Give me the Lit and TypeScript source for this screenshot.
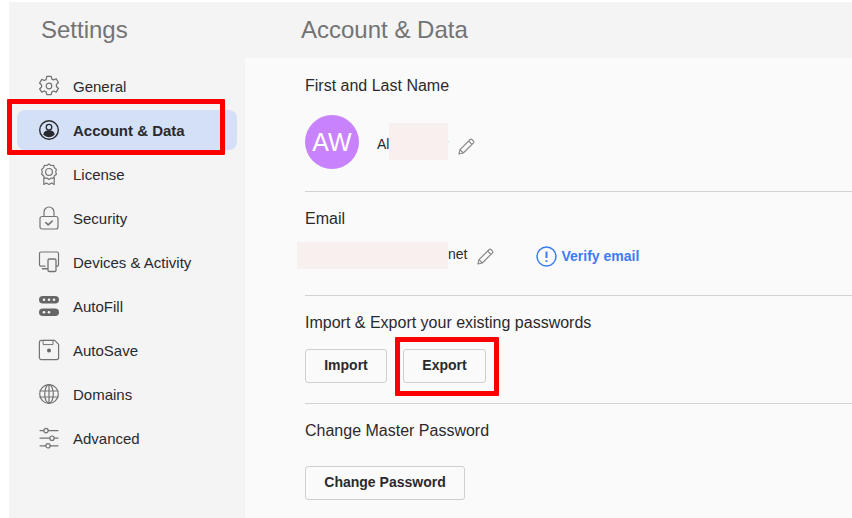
import { LitElement, html, css, svg } from "lit";
import { customElement } from "lit/decorators.js";

const ic = (body: unknown) => html`<svg class="ic" viewBox="0 0 20 20" fill="none" stroke="#737373" stroke-width="1.2" stroke-linecap="round" stroke-linejoin="round">${body}</svg>`;

const icons: Record<string, unknown> = {
  general: svg`<path d="M7.900.500h4.200l.6 2.600 1.700.800 2.400-1.100 2.100 3.500-1.900 1.800v2l1.900 1.800-2.100 3.500-2.400-1.100-1.700.8-.6 2.600H7.900l-.6-2.600-1.700-.8-2.400 1.100L1.100 12.400 3 10.600V8.600L1.100 6.800l2.100-3.500 2.400 1.100 1.700-.8z" transform="translate(-.6 -.2) scale(1.060)"/><circle cx="10" cy="10" r="2.800"/>`,
  account: svg`<circle cx="10" cy="10" r="9.300" stroke="#2a2a2e" stroke-width="1.400"/><circle cx="10" cy="7.200" r="2.800" stroke="#2a2a2e" stroke-width="1.300"/><path d="M4.900 14.400c.5-2.600 2.600-3.600 5.100-3.600s4.600 1 5.100 3.600c-1.300 1.400-3.100 2.200-5.100 2.200s-3.800-.8-5.100-2.200z" fill="#2a2a2e" stroke="#2a2a2e"/>`,
  license: svg`<path d="M10 0l2.100 1.500 2.500-.1.800 2.400 2 1.600-.7 2.400.7 2.400-2 1.600-.8 2.400-2.500-.1L10 15.600l-2.100-1.500-2.500.1-.8-2.400-2-1.600.7-2.400-.7-2.400 2-1.600.8-2.400 2.500.1z"/><circle cx="10" cy="7.900" r="3.400"/><path d="M4.800 14.200v6.300l2.600-1.500 2.600 1.500 2.600-1.500 2.600 1.500v-6.300"/>`,
  security: svg`<rect x="1" y="8.500" width="18" height="12.500" rx="2"/><path d="M5 8.500V4.200C5 1.300 7.200-1 10-1s5 2.300 5 5.200v4.300"/><path d="M6.800 14.600l2.400 2.300 4-3.800" stroke-width="1.500"/>`,
  devices: svg`<path d="M6 14.200H2A1.500 1.500 0 0 1 .5 12.700V1.500A1.500 1.500 0 0 1 2 0h16a1.500 1.500 0 0 1 1.500 1.500v11.200a1.500 1.500 0 0 1-1.500 1.500h-.5"/><path d="M3.500 16.800h5.500" stroke-width="1.600"/><rect x="9" y="7" width="8" height="12.500" rx="1.300" fill="#f4f4f4" stroke-width="1.300"/>`,
  autofill: svg`<rect x="0" y="0" width="20" height="7.500" rx="3.750" fill="#666" stroke="none"/><rect x="0" y="12.500" width="20" height="7.500" rx="3.750" fill="#666" stroke="none"/><g fill="#f4f4f4" stroke="none"><circle cx="5" cy="3.750" r="1.300"/><circle cx="10" cy="3.750" r="1.300"/><circle cx="15" cy="3.750" r="1.300"/><circle cx="5" cy="16.250" r="1.300"/><circle cx="10" cy="16.250" r="1.300"/></g>`,
  autosave: svg`<path d="M2 .4h13.700l3.900 3.900v13.300a2 2 0 0 1-2 2H2a2 2 0 0 1-1.600-2V2.400A2 2 0 0 1 2 .4z"/><path d="M4.500.4h9.500v4.200H4.500z" stroke-width="1"/><circle cx="10" cy="10.500" r="2" fill="#666" stroke="none"/>`,
  domains: svg`<circle cx="10" cy="10" r="9.300"/><ellipse cx="10" cy="10" rx="4.300" ry="9.300"/><path d="M10 .7v18.600M.9 7h18.200M.9 13h18.200"/>`,
  advanced: svg`<path d="M1 2.600h3.800M9.200 2.600H19M1 10.200h9.800M15.200 10.200H19M1 17.800h5.800M11.200 17.800H19"/><circle cx="7" cy="2.600" r="2.200"/><circle cx="13" cy="10.200" r="2.200"/><circle cx="9" cy="17.800" r="2.200"/>`,
};

const pencil = (cls = "") => html`<svg class="pencil ${cls}" viewBox="0 0 17 17" fill="none" stroke="#8a8a8a" stroke-width="1.200" stroke-linejoin="round"><path d="M1 16l1-4.300L12.200 1.500a1.200 1.200 0 0 1 1.700 0l1.600 1.600a1.200 1.200 0 0 1 0 1.700L5.300 15z"/><path d="M10.600 3.100l3.300 3.300M2 11.700L5.300 15"/></svg>`;

const nav = [
  ["general", "General"],
  ["account", "Account & Data"],
  ["license", "License"],
  ["security", "Security"],
  ["devices", "Devices & Activity"],
  ["autofill", "AutoFill"],
  ["autosave", "AutoSave"],
  ["domains", "Domains"],
  ["advanced", "Advanced"],
];

@customElement("app-root")
export class AppRoot extends LitElement {
  static styles = css`
    :host {
      display: block;
      width: 852px;
      height: 518px;
      overflow: hidden;
      position: relative;
      background: #fff;
      font-family: "Liberation Sans", Arial, sans-serif;
      color: #2a2a2e;
    }
    .shell {
      display: grid;
      grid-template-columns: 236px 1fr;
      grid-template-rows: 56px 1fr;
      height: 516px;
      margin: 2px 0 0 9px;
      background: #f4f4f4;
    }
    .title {
      font-size: 24px;
      line-height: 56px;
      color: #737373;
    }
    .title.left { padding-left: 32px; }
    .title.right { padding-left: 56px; }
    .side { padding: 8px 8px 0; }
    .item {
      display: flex;
      align-items: center;
      gap: 14px;
      height: 40px;
      margin-bottom: 4px;
      padding-left: 22px;
      border-radius: 8px;
      font-size: 15px;
    }
    .item.on { background: #d3e0f6; font-weight: 700; }
    .ic { width: 20px; height: 20px; flex: none; overflow: visible; }
    .main { background: #fafafa; padding-left: 60px; }
    h2 { margin: 0; font-size: 16px; font-weight: 400; line-height: 20px; }
    .sec { border-bottom: 1px solid #d2d2d2; }
    .name { height: 134px; padding-top: 18px; box-sizing: border-box; }
    .namerow { display: flex; align-items: center; margin-top: 19px; height: 54px; }
    .avatar {
      width: 54px; height: 54px; border-radius: 50%;
      background: #c883fc; color: #fff;
      display: flex; align-items: center; justify-content: center;
      font-size: 25px;
    }
    .val { font-size: 14px; color: #2a2a2e; }
    .full { margin: 4px 10px 0 18px; white-space: nowrap; }
    .pencil { width: 17px; height: 17px; flex: none; }
    .pencil.low { margin-top: 8px; }
    .email { height: 104px; padding-top: 17px; box-sizing: border-box; }
    .emailrow { display: flex; align-items: center; margin-top: 17px; height: 20px; padding-left: 143px; }
    .emailrow .val { margin: 0 10px 4px 0; }
    .verify {
      display: flex; align-items: center; gap: 4px;
      margin-left: 42px;
      color: #3b7cf6; font-size: 14px; font-weight: 700;
    }
    .verify svg { width: 21px; height: 21px; }
    .imp { height: 108px; padding-top: 17px; box-sizing: border-box; }
    .btns { display: flex; gap: 16px; margin-top: 16px; }
    button {
      height: 34px;
      padding: 0 0 2px;
      background: #fafafa;
      border: 1px solid #cfcfcf;
      border-radius: 3px;
      font: 700 14px "Liberation Sans", Arial, sans-serif;
      color: #2a2a2e;
    }
    .b1 { width: 82px; }
    .b2 { width: 83px; }
    .b3 { width: 160px; }
    .chg { padding-top: 17px; }
    .chg button { margin-top: 25px; display: block; }
    .mark { position: absolute; box-sizing: border-box; border: 5px solid #fc0000; border-radius: 1px; }
    .m1 { left: 7px; top: 99px; width: 218px; height: 56px; }
    .m2 { left: 395px; top: 337px; width: 104px; height: 59px; }
    .patch { position: absolute; background: #f8f0ee; }
    .p1 { left: 389px; top: 123px; width: 59px; height: 37px; }
    .p2 { left: 297px; top: 242px; width: 151px; height: 27px; }
  `;

  render() {
    return html`
      <div class="shell">
        <div class="title left">Settings</div>
        <div class="title right">Account &amp; Data</div>
        <nav class="side">
          ${nav.map(
            ([k, label]) => html`<div class="item ${k === "account" ? "on" : ""}">${ic(icons[k])}<span>${label}</span></div>`
          )}
        </nav>
        <main class="main">
          <section class="sec name">
            <h2>First and Last Name</h2>
            <div class="namerow">
              <div class="avatar">AW</div>
              <div class="val full">Alex Walter</div>
              ${pencil("low")}
            </div>
          </section>
          <section class="sec email">
            <h2>Email</h2>
            <div class="emailrow">
              <span class="val">net</span>
              ${pencil()}
              <span class="verify">
                <svg viewBox="0 0 21 21" fill="none" stroke="#3b7cf6" stroke-width="1.500"><circle cx="10.500" cy="10.500" r="9.500"/><path d="M10.500 5.500v6.500M10.500 14.300v1.700" stroke-width="2"/></svg>
                Verify email
              </span>
            </div>
          </section>
          <section class="sec imp">
            <h2>Import &amp; Export your existing passwords</h2>
            <div class="btns">
              <button class="b1">Import</button>
              <button class="b2">Export</button>
            </div>
          </section>
          <section class="chg">
            <h2>Change Master Password</h2>
            <button class="b3">Change Password</button>
          </section>
        </main>
      </div>
      <div class="patch p1"></div>
      <div class="patch p2"></div>
      <div class="mark m1"></div>
      <div class="mark m2"></div>
    `;
  }
}
